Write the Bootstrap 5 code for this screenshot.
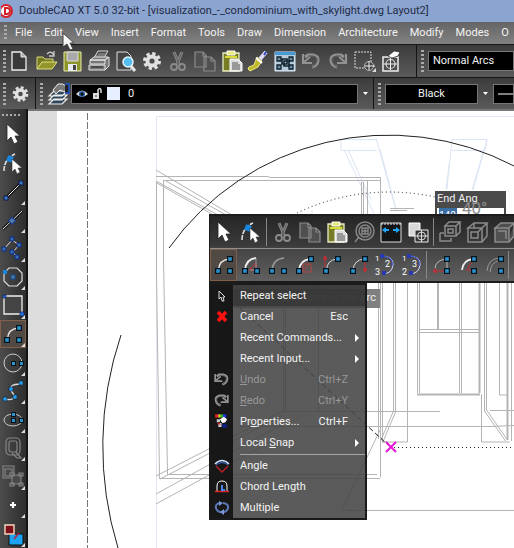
<!DOCTYPE html>
<html lang="en">
<head>
<meta charset="utf-8">
<meta name="viewport" content="width=device-width, initial-scale=1">
<title>DoubleCAD XT 5.0 32-bit</title>
<link href="https://cdn.jsdelivr.net/npm/bootstrap@5.3.0/dist/css/bootstrap.min.css" rel="stylesheet">
<script src="https://cdn.jsdelivr.net/npm/bootstrap@5.3.0/dist/js/bootstrap.bundle.min.js"></script>
<style>
  body { font-family: Roboto, "Noto Sans", sans-serif; font-size: 11px; line-height: 16px; color: #f2f2f2; background: #ddd; }
  svg { display: block; flex: none; }
  .ic { width: 24px; height: 24px; }
  .titlebar { height: 22px; background: #8ca5d0; color: #1f2a44; gap: 6px; padding-left: 1px; }
  .menus { height: 22px; background: linear-gradient(#646464, #828282); gap: 12px; padding-left: 4px; }
  .menus a { color: #f4f4f4; text-decoration: none; }
  .bar { background: linear-gradient(#3c3c3c, #5a5a5a); border-top: 1px solid #161616; }
  .bar-main { height: 33px; }
  .bar-prop { height: 32px; }
  .grip { width: 3px; height: 22px; flex: none; background: repeating-linear-gradient(#aaa 0 2px, transparent 2px 4px); }
  .menus .grip { height: 16px; margin-right: -4px; }
  .section { border-right: 1px solid #141414; flex: none; height: 100%; padding-left: 3px; }
  .tool { background: none; border: 0; padding: 0; display: flex; align-items: center; justify-content: center; position: relative; min-width: 0; }
  .tools-main { display: grid; grid-template-columns: repeat(15, 1fr); width: 398px; margin-right: 12px; }
  .corner::after { content: ""; position: absolute; right: 1px; bottom: 1px; border: 2px solid transparent; border-right-color: #ddd; border-bottom-color: #ddd; }
  .combo { background: #000; color: #f2f2f2; border: 1px solid #777; border-radius: 0; height: 20px; padding: 0 4px; appearance: none; font-size: 11px; line-height: 16px; }
  .combo-layer { width: 287px; gap: 4px; text-align: left; }
  .combo-color { width: 93px; text-align-last: center; }
  .swatch { width: 13px; height: 13px; background: #e6eeff; margin-right: 4px; }
  .side { width: 28px; background: linear-gradient(90deg, #4c4c4c, #2d2d2d); border-right: 2px solid #151515; flex: none; padding-top: 5px; }
  .side .grip-h { width: 20px; height: 2px; margin: 0 auto 4px 2px; background: repeating-linear-gradient(90deg, #aaa 0 2px, transparent 2px 4px); flex: none; }
  .side .tool { flex: 1 1 0; min-height: 0; }
  .active-tool { background: #514943; box-shadow: inset 0 0 0 1px #80604a; }
  .paper { min-width: 0; background: #ddd; border-top: 2px solid #777; }
  .drawing { position: absolute; inset: 0; width: 100%; height: 100%; }
  .pointer { position: absolute; left: 61px; top: 32px; z-index: 5; }
  .angle { position: absolute; left: 407px; top: 80px; width: 71px; background: #4a4a4a; line-height: 15px; }
  .angle label { padding-left: 2px; display: block; }
  .angle-box { background: #fff; border: 2px solid #4a4a4a; height: 18px; padding-left: 2px; }
  .angle-box input { width: 18px; height: 14px; padding: 0; border: 0; background: #3a6ea5; color: #fff; font-size: 10px; line-height: 12px; display: block; }
  .hint { position: absolute; left: 206px; top: 178px; width: 146px; height: 19px; background: #808080; color: #eee; padding: 1px 4px; white-space: nowrap; text-align: right; }
  .palette { position: absolute; left: 181px; top: 103px; right: 0; background: linear-gradient(#262626, #3a3a3a 45%, #444 50%, #606060); border: 1px solid #1c1c1c; border-width: 2px 0 2px 1px; overflow: hidden; }
  .palette .tool { width: 27px; height: 32px; flex: none; }
  .palette .rule { width: 1px; height: 28px; background: #888; flex: none; align-self: center; }
  .prow:first-child .rule { margin: 0 2px; }
  .prow + .prow { border-top: 1px solid #909090; }
  .ctx { position: absolute; left: 181px; top: 172px; width: 158px; background: linear-gradient(90deg, rgba(16,16,16,.97) 0 23px, rgba(68,68,68,.88) 23px); border: 2px solid #1a1a1a; border-width: 2px 2px 2px 1px; z-index: 2; }
  .ctx button { display: flex; align-items: center; width: 100%; height: 21px; padding: 0 6px 0 0; border: 0; background: none; color: #f4f4f4; text-align: left; white-space: nowrap; }
  .ctx button svg, .ctx .blank { width: 23px; height: 19px; margin-right: 7px; flex: none; }
  .ctx .hot { background: linear-gradient(90deg, transparent 23px, rgba(50,50,50,.7) 23px); }
  .ctx button:disabled { color: #989898; }
  .ctx .key { margin-left: auto; margin-right: 11px; }
  .ctx .sub { margin-left: auto; border: 4px solid transparent; border-left-color: #fff; border-right: 0; }
  .ctx .divider { height: 1px; margin: 1px 0 0 30px; background: #a5a5a5; }
</style>
</head>
<body class="vh-100 overflow-hidden d-flex flex-column position-relative">

<svg width="0" height="0" class="position-absolute" aria-hidden="true">
  <defs>
    <symbol id="sq" viewBox="0 0 5 5"><rect x=".5" y=".5" width="4" height="4" fill="#2b93c9" stroke="#06121c"/></symbol>
    <symbol id="arrow" viewBox="0 0 24 24"><path d="M6 2v17l4-4 3 7 4-2-3-6h5z" fill="#fff" stroke="#222" stroke-width=".8"/></symbol>
    <symbol id="node" viewBox="0 0 24 24"><path d="M3 20q0-12 11-17" fill="none" stroke="#ddd" stroke-width="1.6" stroke-dasharray="5 1"/><rect x="6" y="5" width="6" height="6" fill="#1686e0" transform="rotate(20 9 8)"/><path d="M11 8v13l3-3 2 5 3-2-2-4h4z" fill="#fff" stroke="#333" stroke-width=".6"/></symbol>
    <symbol id="new" viewBox="0 0 24 24"><path d="M5 3h9l5 5v13H5z" fill="#3a3a3a" stroke="#eee" stroke-width="1.3"/><path d="M14 3v5h5" fill="#aaa" stroke="#eee"/></symbol>
    <symbol id="open" viewBox="0 0 24 24"><path d="M3 20V8h6l2 2h8v4" fill="#777b21" stroke="#d5d779"/><path d="M3 20l5-7h15l-5 7z" fill="#92962b" stroke="#e0e183"/><path d="M13 5q4-4 7 1m0-4v5h-5" fill="none" stroke="#ccc" stroke-width="1.3"/></symbol>
    <symbol id="save" viewBox="0 0 24 24"><path d="M4 3h17v19H4z" fill="#8e9528" stroke="#e9edb0"/><path d="M7 3h11v9H7z" fill="#aaa" stroke="#ddd"/><path d="M8 15h9v7H8z" fill="#e8eaf0"/><path d="M13 16h3v5h-3z" fill="#444"/></symbol>
    <symbol id="print" viewBox="0 0 24 24"><path d="M7 9l4-7h10l-4 7z" fill="#444" stroke="#ddd"/><path d="M9 7h9M11 5h8" stroke="#aaa"/><path d="M3 11l4-3h14l-3 3zM3 11h15v4H3zM18 11l4-3v9l-4 4M2 16h16v5H2z" fill="#777" stroke="#e5e5e5"/><path d="M4 18h12" stroke="#222"/></symbol>
    <symbol id="preview" viewBox="0 0 24 24"><path d="M4 3h10l4 4v14H4z" fill="#444" stroke="#ddd"/><circle cx="15" cy="13" r="5" fill="#55bdf0" stroke="#e5f4fc" stroke-width="1.5"/><path d="M18 17l4 5" stroke="#e5e5e5" stroke-width="3"/></symbol>
    <symbol id="gear" viewBox="0 0 24 24"><circle cx="12" cy="12" r="7.5" fill="none" stroke="#e0e0e0" stroke-width="3" stroke-dasharray="3.3 2.59"/><circle cx="12" cy="12" r="4.6" fill="none" stroke="#e0e0e0" stroke-width="4"/></symbol>
    <symbol id="cut" viewBox="0 0 24 24"><path d="M8 3l5 12M16 3l-5 12" fill="none" stroke="#8b8b8b" stroke-width="3"/><path d="M8 3l5 12M16 3l-5 12" stroke="#505050" stroke-width=".8"/><circle cx="8" cy="18" r="3" fill="none" stroke="#8b8b8b" stroke-width="1.8"/><circle cx="16" cy="18" r="3" fill="none" stroke="#8b8b8b" stroke-width="1.8"/></symbol>
    <symbol id="copy" viewBox="0 0 24 24"><path d="M2 3h8l3 3v12H2zM10 3v4h3M11 8h7l4 4v10H11zM18 8v4h4" fill="#505050" stroke="#8b8b8b" stroke-width="1.2"/></symbol>
    <symbol id="paste" viewBox="0 0 24 24"><path d="M3 4h16v18H3z" fill="#777c25" stroke="#eceec5" stroke-width="1.3"/><path d="M7 2h8v4H7z" fill="#e7e97a" stroke="#fff"/><path d="M5 8h12" stroke="#d6dc35" stroke-width="2"/><path d="M10 10h8l4 4v8H10z" fill="#ddd" stroke="#fff"/><path d="M12 14h6M12 16h8M12 18h8M12 20h8" stroke="#555"/></symbol>
    <symbol id="brush" viewBox="0 0 24 24"><path d="M3 18l5-2 3-8 5 4-4 6-8 4-2-2z" fill="#bdb92a" stroke="#eeea80"/><path d="M10 9l6 5" stroke="#fff" stroke-width="2"/><path d="M14 10l6-7" stroke="#dddcff" stroke-width="4"/><path d="M18 6l2-3" stroke="#3746c2" stroke-width="2"/></symbol>
    <symbol id="blocks" viewBox="0 0 24 24"><path d="M2 3h20v19H2z" fill="#b5cbd9" stroke="#dbeafa"/><path d="M2 3h20v3H2z" fill="#449bd8"/><g fill="#6d8fa6" stroke="#11222e" stroke-width="1.3"><path d="M4 8h4v4H4zM16 8h4v4h-4zM4 16h4v4H4zM16 16h4v4h-4z"/><path d="M9 10h5v5H9zM11 12h5v5h-5z" fill="none" stroke-width="1.6"/></g></symbol>
    <symbol id="undo" viewBox="0 0 24 24"><path d="M6 8l3-2h5q6 1 5 6-1 5-6 6" fill="none" stroke="#929292" stroke-width="3"/><path d="M9 7h5q5 1 4 5-1 4-5 6" fill="none" stroke="#444" stroke-width=".8"/><path d="M4 5v9h9" fill="none" stroke="#929292" stroke-width="2.2"/><path d="M5 13l6-5" stroke="#929292" stroke-width="2"/></symbol>
    <symbol id="redo" viewBox="0 0 24 24"><use href="#undo" transform="matrix(-1 0 0 1 24 0)"/></symbol>
    <symbol id="lasso" viewBox="0 0 24 24"><path d="M3 3h16v16H3z" fill="none" stroke="#ddd" stroke-dasharray="2 1"/><circle cx="17" cy="17" r="4.5" fill="#444" stroke="#bbb"/><path d="M13 17h10M17 12v9" stroke="#eee"/></symbol>
    <symbol id="pick" viewBox="0 0 24 24"><path d="M4 8h15v14H4z" fill="#4e4e4e" stroke="#eee" stroke-width="1.5"/><circle cx="11.5" cy="15" r="4.5" fill="none" stroke="#ddd" stroke-width="1.2"/><path d="M11.5 9v12M5 15h13" stroke="#eee"/><path d="M9 7l6-5 6 1-2 4-6 2z" fill="#fff" stroke="#222" stroke-width=".7"/></symbol>
    <symbol id="layers" viewBox="0 0 24 24"><path d="M2 22l5-5h13l-5 5zM2 18l5-5h13l-5 5zM2 14l5-5h13l-5 5z" fill="#31485c" stroke="#eee" stroke-width="1.2"/><path d="M6 8l5-6q5-1 8 2l-1 6-5-2-4 4z" fill="#777" stroke="#eee"/><path d="M18 2h4v9h-4" fill="#222" stroke="#2258ce" stroke-width="1.5"/></symbol>
    <symbol id="zoomobj" viewBox="0 0 24 24"><g fill="none" stroke="#868686" stroke-width="1.5"><circle cx="13" cy="11" r="9"/><circle cx="13" cy="11" r="6"/><path d="M10 8h6v6h-6zM7 17l-4 5M10 11h6M13 8v6"/></g></symbol>
    <symbol id="stretch" viewBox="0 0 24 24"><path d="M2 3h20v19H2z" fill="#151515" stroke="#ddd"/><path d="M2 4h20" stroke="#eee" stroke-dasharray="2 1"/><path d="M3 10l4-3v2h3v2H7v2zM21 10l-4-3v2h-3v2h3v2z" fill="#22a6fb"/></symbol>
    <symbol id="overlap" viewBox="0 0 24 24"><path d="M3 3h11v13H3z" fill="#d8d8d8" stroke="#fff"/><path d="M9 10h13v12H9z" fill="#333" stroke="#eee"/><circle cx="15.5" cy="16" r="4" fill="none" stroke="#ddd"/><path d="M15.5 10v12M9 16h13" stroke="#ddd"/></symbol>
    <symbol id="cube" viewBox="0 0 24 24"><g fill="none" stroke="#8b8b8b" stroke-width="1.5"><path d="M3 8l6-5h13l-5 5zM3 8h14v14H3zM17 22l5-6V3"/><path d="M9 3v5M6 12h7v6H6zM13 12l4-4"/></g></symbol>
    <symbol id="cubeA" viewBox="0 0 24 24"><g fill="none" stroke="#8b8b8b" stroke-width="1.5"><path d="M7 6l4-4h11l-4 4zM7 6h11v10H7zM18 16l4-4V2M10 9h5v4h-5zM2 13h4M2 13v8h11v-3"/></g></symbol>
    <symbol id="cubeB" viewBox="0 0 24 24"><path d="M3 8l6-5h13l-5 5zM3 8h14v14H3zM17 22l5-6V3M6 11h8v8" fill="#505050" stroke="#8b8b8b" stroke-width="1.5"/></symbol>
    <symbol id="arc" viewBox="0 0 24 24"><path d="M6.5 17Q7 7 17 6" fill="none" stroke="#e5e5e5" stroke-width="1.4"/><use href="#sq" x="3" y="15" width="6" height="6"/><use href="#sq" x="15" y="3" width="6" height="6"/><use href="#sq" x="15" y="15" width="6" height="6"/></symbol>
    <symbol id="arcTri" viewBox="0 0 24 24"><path d="M6 17Q7 6 17 5" fill="none" stroke="#eee" stroke-width="1.8"/><path d="M10 17l7-7v7z" fill="none" stroke="#c23038"/><path d="M17 5v12h-6" fill="none" stroke="#aaa" stroke-width=".8"/><use href="#sq" x="3" y="15" width="6" height="6"/><use href="#sq" x="15" y="15" width="6" height="6"/></symbol>
    <symbol id="arcFaint" viewBox="0 0 24 24"><path d="M6 17Q7 6 18 5" fill="none" stroke="#999" stroke-width="1.5"/><use href="#sq" x="3" y="15" width="6" height="6"/><use href="#sq" x="15" y="15" width="6" height="6"/></symbol>
    <symbol id="arcBox" viewBox="0 0 24 24"><path d="M6 17Q7 7 17 6" fill="none" stroke="#eee" stroke-width="1.8"/><path d="M10 11h8v8h-8zM12 17q0-4 4-5" fill="none" stroke="#b54545"/><use href="#sq" x="3" y="15" width="6" height="6"/><use href="#sq" x="15" y="3" width="6" height="6"/></symbol>
    <symbol id="arcUp" viewBox="0 0 24 24"><path d="M6.5 17Q7 7 17 6" fill="none" stroke="#ddd"/><path d="M5 14V6M3 6l2-3 2 3z" stroke="#c22d35" fill="#c22d35"/><use href="#sq" x="3" y="15" width="6" height="6"/><use href="#sq" x="15" y="3" width="6" height="6"/></symbol>
    <symbol id="arcDown" viewBox="0 0 24 24"><path d="M6 17Q7 7 17 6" fill="none" stroke="#ddd"/><path d="M18 9v8M16 16h4l-2 3z" stroke="#c22d35" fill="#c22d35"/><use href="#sq" x="3" y="15" width="6" height="6"/><use href="#sq" x="15" y="3" width="6" height="6"/></symbol>
    <symbol id="arcNumA" viewBox="0 0 24 24"><path d="M7 3q13 0 12 9t-11 9" fill="none" stroke="#d5d8ff"/><path d="M9 3q11 1 9 10" fill="none" stroke="#3348c8"/><rect x="6" y="1" width="4" height="4" fill="#2738b0"/><rect x="8" y="18" width="4" height="4" fill="#2738b0"/><text x="11" y="14" font-size="9" fill="#fff">2</text><text x="1" y="22" font-size="9" fill="#fff">3</text><text x="1" y="8" font-size="8" fill="#fff">1</text></symbol>
    <symbol id="arcNumB" viewBox="0 0 24 24"><path d="M7 3q13 0 12 9t-11 9" fill="none" stroke="#d5d8ff"/><path d="M9 3q11 1 9 10" fill="none" stroke="#3348c8"/><rect x="6" y="1" width="4" height="4" fill="#2738b0"/><rect x="8" y="18" width="4" height="4" fill="#2738b0"/><text x="11" y="14" font-size="9" fill="#fff">3</text><text x="1" y="22" font-size="9" fill="#fff">2</text><text x="1" y="8" font-size="8" fill="#fff">1</text></symbol>
    <symbol id="arcLeft" viewBox="0 0 24 24"><path d="M6 15Q7 7 17 6M18 8v8" fill="none" stroke="#bbb"/><path d="M16 18H8M7 16l-3 2 3 2z" stroke="#c22d35" fill="#c22d35"/><use href="#sq" x="15" y="3" width="6" height="6"/><use href="#sq" x="15" y="15" width="6" height="6"/></symbol>
    <symbol id="arcRight" viewBox="0 0 24 24"><path d="M6 17Q7 7 17 6" fill="none" stroke="#eee" stroke-width="1.8"/><path d="M10 17h6M12 16q0-5 4-6" fill="none" stroke="#c22d35"/><use href="#sq" x="15" y="3" width="6" height="6"/><use href="#sq" x="15" y="15" width="6" height="6"/></symbol>
    <symbol id="arcGray" viewBox="0 0 24 24"><path d="M4 18Q5 6 16 5M7 19Q8 9 16 8" fill="none" stroke="#999"/><use href="#sq" x="15" y="3" width="6" height="6"/><use href="#sq" x="15" y="15" width="6" height="6"/></symbol>
    <symbol id="line" viewBox="0 0 24 24"><path d="M5 19L19 5" stroke="#111" stroke-width="3"/><path d="M5 19L19 5" stroke="#eee"/><rect x="3" y="17" width="4" height="4" fill="#3c7cc4" stroke="#0a1b50"/><rect x="18" y="2" width="4" height="4" fill="#3c7cc4" stroke="#0a1b50"/></symbol>
    <symbol id="midline" viewBox="0 0 24 24"><path d="M2 21L21 3" stroke="#111" stroke-width="3"/><path d="M2 21L21 3" stroke="#eee"/><rect x="9" y="10" width="5" height="5" fill="#557aaa" stroke="#153b90" transform="rotate(45 11 12)"/></symbol>
    <symbol id="poly" viewBox="0 0 24 24"><path d="M3 13l8-9 7 5-6 7 4 5" fill="none" stroke="#ddd"/><g fill="#3b6eb0" stroke="#0b2b86"><path d="M1 11h4v4H1zM9 1h4v4H9zM16 7h4v4h-4zM9 14h4v4H9zM14 19h4v4h-4z"/></g></symbol>
    <symbol id="circ" viewBox="0 0 24 24"><path d="M8 3h8l5 5v8l-5 5H8l-5-5V8z" fill="none" stroke="#ddd" stroke-width="1.2"/><rect x="10" y="10" width="4" height="4" fill="#55789a" stroke="#0b4d99"/><rect x="2" y="5" width="4" height="4" fill="#1686e0"/></symbol>
    <symbol id="rect" viewBox="0 0 24 24"><path d="M3 3h18v18H3z" fill="#454545" stroke="#eee" stroke-width="1.3"/><path d="M2 2h3v3H2zM19 19h4v4h-4z" fill="#2b6fdd" stroke="#082060" stroke-width=".7"/></symbol>
    <symbol id="circR" viewBox="0 0 24 24"><circle cx="12" cy="12" r="9" fill="none" stroke="#ccc"/><use href="#sq" x="10" y="10" width="5" height="5"/><use href="#sq" x="18" y="10" width="5" height="5"/></symbol>
    <symbol id="spline" viewBox="0 0 24 24"><path d="M4 20c9 2 11-2 7-7s0-8 9-8" fill="none" stroke="#ddd" stroke-width="1.3"/><g fill="#25a0ef" stroke="#07203c" stroke-width=".6"><path d="M2 18h4v4H2zM12 16h4v4h-4zM8 8h4v4H8zM18 2h4v4h-4z"/></g></symbol>
    <symbol id="ell" viewBox="0 0 24 24"><ellipse cx="12" cy="12" rx="9" ry="6" fill="none" stroke="#ccc"/><use href="#sq" x="10" y="4" width="5" height="5"/><use href="#sq" x="10" y="10" width="5" height="5"/><use href="#sq" x="18" y="10" width="5" height="5"/></symbol>
    <symbol id="q" viewBox="0 0 24 24"><g fill="none" stroke="#858585" stroke-width="1.2"><rect x="5" y="2" width="14" height="17" rx="4"/><rect x="8" y="5" width="8" height="11" rx="2"/><path d="M11 17l5 5h4l-5-6"/></g></symbol>
    <symbol id="grp" viewBox="0 0 24 24"><g fill="#494949" stroke="#858585" stroke-width="1.1"><path d="M2 1h11v12H2zM4 4h7v7H4z"/><path d="M11 10h9v9h-9zM9 8h4v3H9zM18 8h4v3h-4zM9 18h4v3H9zM18 18h4v3h-4z"/></g></symbol>
    <symbol id="plus" viewBox="0 0 24 24"><path d="M12 9v6M9 12h6" stroke="#fff" stroke-width="2.2"/></symbol>
    <symbol id="fills" viewBox="0 0 24 24"><path d="M8 12h14v11H8z" fill="#1ba3f2" stroke="#111"/><path d="M4 3h9v9H4z" fill="#7d1018" stroke="#f4d9bd" stroke-width="1.4"/><path d="M13 17l5-6" stroke="#b3223b" stroke-width="1.5"/></symbol>
    <symbol id="props" viewBox="0 0 24 24"><path d="M4 3h4v4H4z" fill="#e22"/><path d="M8 3h3v4H8z" fill="#dd2"/><path d="M11 3h3v4h-3z" fill="#2b2"/><path d="M14 3h4v4h-4z" fill="#23e"/><path d="M10 9l5-3 4 3-2 4-4 1z" fill="#fff"/><path d="M6 9h4v4H6zM8 14h4v5H8z" fill="#ccc"/><path d="M6 15l3-2 2 3z" fill="#b22"/><path d="M13 15h6v5h-6z" fill="#111d7d"/></symbol>
  </defs>
</svg>

<header class="flex-shrink-0">
  <div class="titlebar d-flex align-items-center text-nowrap overflow-hidden">
    <svg width="12" height="14" viewBox="0 0 12 14"><circle cx="5" cy="7" r="6" fill="#fff" stroke="#d3202a" stroke-width="2"/><path d="M4 4h2q3 0 3 3t-3 3H4z" fill="none" stroke="#d3202a" stroke-width="2"/></svg>
    <span>DoubleCAD XT 5.0 32-bit - [visualization_-_condominium_with_skylight.dwg Layout2]</span>
  </div>
  <nav class="menus d-flex align-items-center text-nowrap overflow-hidden" aria-label="Main menu">
    <span class="grip"></span>
    <a href="#">File</a><a href="#">Edit</a><a href="#">View</a><a href="#">Insert</a><a href="#">Format</a><a href="#">Tools</a><a href="#">Draw</a><a href="#">Dimension</a><a href="#">Architecture</a><a href="#">Modify</a><a href="#">Modes</a><a href="#">O</a>
  </nav>
  <div class="bar bar-main d-flex align-items-center overflow-hidden">
    <div class="section d-flex align-items-center">
      <span class="grip"></span>
      <div class="tools-main">
        <button class="tool" aria-label="New"><svg class="ic"><use href="#new"/></svg></button>
        <button class="tool" aria-label="Open"><svg class="ic"><use href="#open"/></svg></button>
        <button class="tool" aria-label="Save"><svg class="ic"><use href="#save"/></svg></button>
        <button class="tool" aria-label="Print"><svg class="ic"><use href="#print"/></svg></button>
        <button class="tool" aria-label="Print preview"><svg class="ic"><use href="#preview"/></svg></button>
        <button class="tool" aria-label="Settings"><svg class="ic"><use href="#gear"/></svg></button>
        <button class="tool" aria-label="Cut"><svg class="ic"><use href="#cut"/></svg></button>
        <button class="tool" aria-label="Copy"><svg class="ic"><use href="#copy"/></svg></button>
        <button class="tool" aria-label="Paste"><svg class="ic"><use href="#paste"/></svg></button>
        <button class="tool" aria-label="Format painter"><svg class="ic"><use href="#brush"/></svg></button>
        <button class="tool" aria-label="Blocks"><svg class="ic"><use href="#blocks"/></svg></button>
        <button class="tool" aria-label="Undo"><svg class="ic"><use href="#undo"/></svg></button>
        <button class="tool" aria-label="Redo"><svg class="ic"><use href="#redo"/></svg></button>
        <button class="tool corner" aria-label="Select area"><svg class="ic"><use href="#lasso"/></svg></button>
        <button class="tool" aria-label="Pick point"><svg class="ic"><use href="#pick"/></svg></button>
      </div>
    </div>
    <span class="grip mx-1"></span>
    <select class="combo flex-grow-1" aria-label="Arc style"><option>Normal Arcs</option></select>
  </div>
  <div class="bar bar-prop d-flex align-items-center overflow-hidden">
    <div class="section d-flex align-items-center">
      <span class="grip me-1"></span>
      <button class="tool me-1" aria-label="Options"><svg width="21" height="24"><use href="#gear"/></svg></button>
    </div>
    <div class="section d-flex align-items-center ps-1">
      <span class="grip me-1"></span>
      <button class="tool" aria-label="Layers"><svg class="ic"><use href="#layers"/></svg></button>
      <button class="combo combo-layer d-flex align-items-center" aria-label="Layer 0">
        <svg width="12" height="12" viewBox="0 0 12 12"><path d="M0 6q6-7 12 0-6 6-12 0z" fill="#ddd"/><circle cx="6" cy="6" r="3" fill="#245d9e"/><circle cx="6" cy="6" r="1.5" fill="#000"/></svg>
        <svg width="11" height="13" viewBox="0 0 11 13"><path d="M1 6h6v6H1z" fill="#ddd"/><path d="M6 6V3q2-3 3 0v3" fill="none" stroke="#ddd" stroke-width="1.5"/><path d="M4 8v2" stroke="#333"/></svg>
        <span class="swatch"></span><span>0</span>
      </button>
      <svg class="mx-1" width="7" height="5"><path d="M1 1h5L3.5 4z" fill="#fff"/></svg>
    </div>
    <span class="grip mx-1"></span>
    <select class="combo combo-color flex-shrink-0" aria-label="Colour"><option>Black</option></select>
    <svg class="mx-1" width="7" height="5"><path d="M1 1h5L3.5 4z" fill="#fff"/></svg>
    <button class="combo flex-grow-1 pe-0" aria-label="Line pattern"><svg class="w-100" height="2"><path d="M0 1h200" stroke="#fff"/></svg></button>
  </div>
</header>

<svg class="pointer" width="14" height="20" viewBox="0 0 14 20"><path d="M2 1v14l4-3 3 6 3-1-3-6h4z" fill="#f5f5f5" stroke="#444"/></svg>

<main class="d-flex flex-grow-1 overflow-hidden">
  <aside class="side d-flex flex-column" aria-label="Drawing tools">
    <span class="grip-h"></span>
    <button class="tool" aria-label="Select"><svg class="ic"><use href="#arrow"/></svg></button>
    <button class="tool" aria-label="Edit node"><svg class="ic"><use href="#node"/></svg></button>
    <button class="tool corner" aria-label="Line"><svg class="ic"><use href="#line"/></svg></button>
    <button class="tool corner" aria-label="Construction line"><svg class="ic"><use href="#midline"/></svg></button>
    <button class="tool corner" aria-label="Polyline"><svg class="ic"><use href="#poly"/></svg></button>
    <button class="tool corner" aria-label="Polygon"><svg class="ic"><use href="#circ"/></svg></button>
    <button class="tool corner" aria-label="Rectangle"><svg class="ic"><use href="#rect"/></svg></button>
    <button class="tool corner active-tool" aria-label="Arc"><svg class="ic"><use href="#arc"/></svg></button>
    <button class="tool corner" aria-label="Circle"><svg class="ic"><use href="#circR"/></svg></button>
    <button class="tool corner" aria-label="Spline"><svg class="ic"><use href="#spline"/></svg></button>
    <button class="tool corner" aria-label="Ellipse"><svg class="ic"><use href="#ell"/></svg></button>
    <button class="tool corner" aria-label="Text balloon"><svg class="ic"><use href="#q"/></svg></button>
    <button class="tool corner" aria-label="Group"><svg class="ic"><use href="#grp"/></svg></button>
    <button class="tool corner" aria-label="Point"><svg class="ic"><use href="#plus"/></svg></button>
    <button class="tool corner" aria-label="Fill"><svg class="ic"><use href="#fills"/></svg></button>
  </aside>

  <section class="paper flex-grow-1 position-relative overflow-hidden">
    <svg class="drawing" aria-label="Drawing canvas">
      <g transform="translate(-28 -111)" fill="none">
        <rect x="57" y="111" width="4000" height="4000" fill="#fff"/>
        <path d="M87.5 113V4000" stroke="#777" stroke-dasharray="7 2"/>
        <path d="M156.5 4000V116.5H4000" stroke="#e3e5f0"/>
        <g stroke="#dbe5f5">
          <path d="M341 139.5h35M341 139.5v11h36M344 150l21 44 9 20M348 150l23 50M376 138l20 72M380 149l16 60M452 150.5h33l2-11h-35M452 139l-5 50M449 165l-3 25M487 140l-14 50M484 150l-12 40M312 210v4"/>
        </g>
        <g stroke="#b4b4b4">
          <path d="M156 176.5h112l2 1h110M163 180.5h217M163.5 180v80l4 214M156.5 182v90l3 206M156 170l76 45M156 181l62 34M157 183l60 34M166 181l60 34"/>
          <path d="M156 476l127-65M160 479l123-64M156 494l127-70M156 504l110-60M159 478.5h221M167 474.5h210"/>
          <path d="M380.5 177v300M378.5 283v156M382.5 283v160M361.5 182v32M363.5 182v32M367.5 181v33M390 208.5h24M390 210.5h17"/>
          <path d="M393.5 283v128l-13 30M395.5 283v129l-13 31M407.5 283v159H382M484.5 283v128l21 30M486.5 283v127l21 30M481.5 394v48h28M499.5 283v112h8M511.5 283v158"/>
          <path d="M417.5 283v110M419.5 283v110M437.5 283v47M438.5 283v47M459.5 283v110M461.5 283v110M419 329.5h61M419 332.5h61"/>
          <path d="M283.5 285v126M285.5 285v126M318.5 285v126M283 411.5h157M490 410.5h500M240 426.5h250l24-1h500M342 510.5h600M342 510l38-80"/>
          <path d="M417 394.5h63M479.5 283v110M507.5 283v157" stroke-width="2"/>
        </g>
        <path d="M169 248A270 270 0 0 1 514 166M121 335A348 348 0 0 0 118 548" stroke="#222"/>
        <path d="M297 213A213 213 0 0 1 435 197M394 447.5h500" stroke="#222" stroke-dasharray="1 3"/>
        <path d="M240 308L388 445" stroke="#222" stroke-dasharray="5 3"/>
        <path d="M386 442l10 10M396 442l-10 10" stroke="#e815d8" stroke-width="2"/>
      </g>
    </svg>

    <div class="angle">
      <label for="endang">End Ang</label>
      <div class="angle-box"><input id="endang" value="140"></div>
    </div>
    <svg class="drawing pe-none"><text x="434" y="103" font-size="17" fill="#8c8c8c">40°</text></svg>
    <div class="hint">Define end point of the arc</div>

    <div class="palette">
      <div class="prow d-flex">
        <button class="tool" aria-label="Select"><svg class="ic"><use href="#arrow"/></svg></button>
        <button class="tool" aria-label="Edit node"><svg class="ic"><use href="#node"/></svg></button>
        <span class="rule"></span>
        <button class="tool" aria-label="Cut"><svg class="ic"><use href="#cut"/></svg></button>
        <button class="tool" aria-label="Copy"><svg class="ic"><use href="#copy"/></svg></button>
        <button class="tool" aria-label="Paste"><svg class="ic"><use href="#paste"/></svg></button>
        <button class="tool" aria-label="Zoom object"><svg class="ic"><use href="#zoomobj"/></svg></button>
        <button class="tool" aria-label="Stretch"><svg class="ic"><use href="#stretch"/></svg></button>
        <button class="tool" aria-label="Send back"><svg class="ic"><use href="#overlap"/></svg></button>
        <span class="rule"></span>
        <button class="tool" aria-label="View box"><svg class="ic"><use href="#cubeA"/></svg></button>
        <button class="tool" aria-label="Wire box"><svg class="ic"><use href="#cube"/></svg></button>
        <button class="tool" aria-label="Solid box"><svg class="ic"><use href="#cubeB"/></svg></button>
      </div>
      <div class="prow d-flex">
        <button class="tool active-tool" aria-label="Arc by centre"><svg class="ic"><use href="#arc"/></svg></button>
        <button class="tool" aria-label="Arc concentric"><svg class="ic"><use href="#arcTri"/></svg></button>
        <button class="tool" aria-label="Arc two points"><svg class="ic"><use href="#arcFaint"/></svg></button>
        <button class="tool" aria-label="Arc radius"><svg class="ic"><use href="#arcBox"/></svg></button>
        <button class="tool" aria-label="Arc tangent up"><svg class="ic"><use href="#arcUp"/></svg></button>
        <button class="tool" aria-label="Arc tangent down"><svg class="ic"><use href="#arcDown"/></svg></button>
        <button class="tool" aria-label="Arc 1-2-3"><svg class="ic"><use href="#arcNumA"/></svg></button>
        <button class="tool" aria-label="Arc 1-3-2"><svg class="ic"><use href="#arcNumB"/></svg></button>
        <span class="rule"></span>
        <button class="tool" aria-label="Arc left"><svg class="ic"><use href="#arcLeft"/></svg></button>
        <button class="tool" aria-label="Arc right"><svg class="ic"><use href="#arcRight"/></svg></button>
        <button class="tool" aria-label="Arc offset"><svg class="ic"><use href="#arcGray"/></svg></button>
        <span class="rule"></span>
      </div>
    </div>

    <div class="ctx" role="menu">
      <button class="hot" role="menuitem"><svg viewBox="0 0 23 19"><path d="M9 5v8l2-2 1 4h2l-1-4h2z" fill="#111" stroke="#ddd"/></svg>Repeat select</button>
      <button role="menuitem"><svg viewBox="0 0 23 19"><path d="M8 5l8 9M16 5l-8 9" stroke="#f11" stroke-width="3.5"/></svg>Cancel<span class="key">Esc</span></button>
      <button role="menuitem"><span class="blank"></span>Recent Commands...<span class="sub"></span></button>
      <button role="menuitem"><span class="blank"></span>Recent Input...<span class="sub"></span></button>
      <button role="menuitem" disabled><svg><use href="#undo"/></svg><span><u>U</u>ndo</span><span class="key">Ctrl+Z</span></button>
      <button role="menuitem" disabled><svg><use href="#redo"/></svg><span><u>R</u>edo</span><span class="key">Ctrl+Y</span></button>
      <button role="menuitem"><svg><use href="#props"/></svg><span>Pr<u>o</u>perties...</span><span class="key">Ctrl+F</span></button>
      <button role="menuitem"><span class="blank"></span><span>Local <u>S</u>nap</span><span class="sub"></span></button>
      <div class="divider"></div>
      <button role="menuitem"><svg viewBox="0 0 23 19"><path d="M5 8q7-7 14 0" fill="none" stroke="#cfe3ff" stroke-width="1.5"/><path d="M6 9q6-5 12 0" fill="none" stroke="#3a6fd0"/><path d="M6 10l6 6 6-6" fill="none" stroke="#c22028" stroke-width="1.3"/></svg>Angle</button>
      <button role="menuitem"><svg viewBox="0 0 23 19"><path d="M7 14V9q0-5 5-5t5 5v5" fill="none" stroke="#fff"/><path d="M5 14.5h14" stroke="#d22" stroke-width="1.5"/><path d="M12 8v5h3" fill="none" stroke="#4d86f2" stroke-width="2"/></svg>Chord Length</button>
      <button role="menuitem"><svg viewBox="0 0 23 19"><path d="M10 5q-5 1-4 5t5 4M13 5q6 1 5 5t-5 4" fill="none" stroke="#5c78b8" stroke-width="2"/><path d="M9 3l4 2-4 3zM14 11l-4 3 4 3z" fill="#7d9ad8"/></svg>Multiple</button>
    </div>
  </section>
</main>
</body>
</html>
